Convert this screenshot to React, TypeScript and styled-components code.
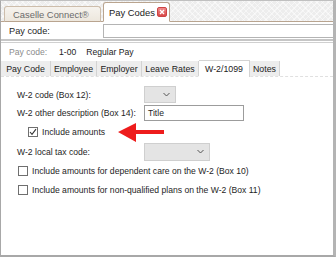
import React from "react";
import styled, { createGlobalStyle } from "styled-components";

const GlobalStyle = createGlobalStyle`
  html, body { margin: 0; padding: 0; background: #ffffff; }
  body { font-family: "Liberation Sans", Arial, sans-serif; font-size: 8.6px; color: #1e1e1e; }
`;

const Frame = styled.div`
  width: 336px;
  height: 257px;
  box-sizing: border-box;
  border-left: 1px solid #a8a8a8;
  border-top: 1px solid #c0c0c0;
  border-right: 3px solid #b4b4b4;
  border-bottom: 2px solid #a8a8a8;
  display: flex;
  flex-direction: column;
  overflow: hidden;
  position: relative;
`;

const TabStrip = styled.div`
  height: 20px;
  display: flex;
  align-items: flex-end;
  padding-left: 3px;
  gap: 2px;
  background-color: #ededed;
  background-image: repeating-linear-gradient(45deg, rgba(255,255,255,0.5) 0 1px, transparent 1px 4px),
    repeating-linear-gradient(-45deg, rgba(255,255,255,0.5) 0 1px, transparent 1px 4px);
  border-bottom: 1px solid #b9a48f;
`;

const DocTab = styled.div<{ $active?: boolean }>`
  box-sizing: border-box;
  flex-shrink: 0;
  white-space: nowrap;
  height: ${(p) => (p.$active ? 20 : 16)}px;
  width: ${(p) => (p.$active ? 67 : 97)}px;
  margin-bottom: -1px;
  border: 1px solid ${(p) => (p.$active ? "#b9a48f" : "#cdbdab")};
  border-bottom: ${(p) => (p.$active ? "1px solid #ffffff" : "1px solid #b9a48f")};
  border-radius: 3px 3px 0 0;
  background: ${(p) => (p.$active ? "#ffffff" : "linear-gradient(#f6f3ee, #ede7dd)")};
  color: ${(p) => (p.$active ? "#222" : "#6b6b6b")};
  font-size: 9.4px;
  display: flex;
  align-items: center;
  justify-content: space-between;
  padding: 0 2px 0 ${(p) => (p.$active ? 5 : 8)}px;
`;

const CloseBox = styled.span`
  width: 10px;
  height: 10px;
  border-radius: 2px;
  background: linear-gradient(#f08a8a, #d94848);
  border: 1px solid #c44;
  box-sizing: border-box;
  display: flex;
  align-items: center;
  justify-content: center;
`;

const SearchRow = styled.div`
  height: 17px;
  display: flex;
  align-items: center;
  padding-left: 8px;
  background: #ffffff;
  font-size: 9.2px;
`;

const SearchLabel = styled.span`
  width: 94px;
`;

const SearchInput = styled.div`
  flex: 1;
  height: 14px;
  border: 1px solid #b4b4b4;
  border-right: none;
  box-sizing: border-box;
`;

const Divider = styled.div`
  height: 1px;
  border-top: 2px solid #c6c6c6;
  border-bottom: 1px solid #d0d0d0;
`;

const InfoRow = styled.div`
  height: 17px;
  display: flex;
  align-items: center;
  padding-left: 8px;
  gap: 10px;
  color: #222;
`;

const InfoLabel = styled.span`
  color: #8c8c8c;
  width: 40px;
`;

const TabRow = styled.div`
  height: 16px;
  display: flex;
  align-items: flex-end;
  border-bottom: 1px dashed #e0e0e0;
`;

const PanelTab = styled.div<{ $active?: boolean; $w: number }>`
  box-sizing: border-box;
  width: ${(p) => p.$w}px;
  height: ${(p) => (p.$active ? 17 : 15)}px;
  margin-bottom: ${(p) => (p.$active ? -1 : 0)}px;
  background: ${(p) => (p.$active ? "#ffffff" : "#ededed")};
  border-right: 1px solid #d3d3d3;
  border-top: ${(p) => (p.$active ? "1px solid #d3d3d3" : "none")};
  display: flex;
  align-items: center;
  justify-content: center;
  color: #222;
  font-size: 8.8px;
`;

const Panel = styled.div`
  flex: 1;
  padding: 8px 0 0 16px;
  display: flex;
  flex-direction: column;
`;

const FieldRow = styled.div<{ $h: number }>`
  height: ${(p) => p.$h}px;
  display: flex;
  align-items: center;
`;

const FieldLabel = styled.span`
  width: 127px;
`;

const Combo = styled.div<{ $w: number; $h: number }>`
  box-sizing: border-box;
  width: ${(p) => p.$w}px;
  height: ${(p) => p.$h}px;
  background: #e4e4e4;
  border: 1px solid #cfcfcf;
  display: flex;
  align-items: center;
  justify-content: flex-end;
  padding-right: 5px;
`;

const TextBox = styled.div`
  box-sizing: border-box;
  width: 100px;
  height: 16px;
  border: 1px solid #9c9c9c;
  display: flex;
  align-items: center;
  padding-left: 3px;
`;

const CheckRow = styled.label<{ $indent?: number; $h: number }>`
  height: ${(p) => p.$h}px;
  display: flex;
  align-items: center;
  gap: 4px;
  padding-left: ${(p) => p.$indent ?? 1}px;
`;

const Box = styled.span`
  box-sizing: border-box;
  width: 10px;
  height: 10px;
  border: 1px solid #6f6f6f;
  background: #ffffff;
  display: flex;
  align-items: center;
  justify-content: center;
`;

const Arrow = styled.svg`
  position: absolute;
  left: 116px;
  top: 121px;
`;

const Chevron = () => (
  <svg width="7" height="5" viewBox="0 0 7 5">
    <path d="M0.5 1 L3.5 4 L6.5 1" fill="none" stroke="#555" strokeWidth="1" />
  </svg>
);

const Check = ({ checked }: { checked?: boolean }) => (
  <Box>
    {checked && (
      <svg width="8" height="8" viewBox="0 0 8 8">
        <path d="M1 4 L3 6.3 L7 1.2" fill="none" stroke="#333" strokeWidth="1.1" />
      </svg>
    )}
  </Box>
);

const tabs = [
  { label: "Pay Code", w: 50 },
  { label: "Employee", w: 46 },
  { label: "Employer", w: 45 },
  { label: "Leave Rates", w: 57 },
  { label: "W-2/1099", w: 51, active: true },
  { label: "Notes", w: 30 },
];

export default function App() {
  return (
    <>
      <GlobalStyle />
      <Frame>
        <TabStrip>
          <DocTab>Caselle Connect®</DocTab>
          <DocTab $active>
            Pay Codes
            <CloseBox>
              <svg width="6" height="6" viewBox="0 0 6 6">
                <path d="M1 1 L5 5 M5 1 L1 5" stroke="#fff" strokeWidth="1.4" />
              </svg>
            </CloseBox>
          </DocTab>
        </TabStrip>
        <SearchRow>
          <SearchLabel>Pay code:</SearchLabel>
          <SearchInput />
        </SearchRow>
        <Divider />
        <InfoRow>
          <InfoLabel>Pay code:</InfoLabel>
          <span>1-00</span>
          <span>Regular Pay</span>
        </InfoRow>
        <TabRow>
          {tabs.map((t) => (
            <PanelTab key={t.label} $w={t.w} $active={t.active}>
              {t.label}
            </PanelTab>
          ))}
        </TabRow>
        <Panel>
          <FieldRow $h={19}>
            <FieldLabel>W-2 code (Box 12):</FieldLabel>
            <Combo $w={32} $h={17}>
              <Chevron />
            </Combo>
          </FieldRow>
          <FieldRow $h={18}>
            <FieldLabel>W-2 other description (Box 14):</FieldLabel>
            <TextBox>Title</TextBox>
          </FieldRow>
          <CheckRow $indent={11} $h={20}>
            <Check checked />
            Include amounts
          </CheckRow>
          <FieldRow $h={19}>
            <FieldLabel>W-2 local tax code:</FieldLabel>
            <Combo $w={66} $h={18}>
              <Chevron />
            </Combo>
          </FieldRow>
          <CheckRow $h={19}>
            <Check />
            Include amounts for dependent care on the W-2 (Box 10)
          </CheckRow>
          <CheckRow $h={19}>
            <Check />
            Include amounts for non-qualified plans on the W-2 (Box 11)
          </CheckRow>
        </Panel>
        <Arrow width="50" height="22" viewBox="0 0 50 22">
          <polygon points="1,10 19,1 19,8 47,8 47,12 19,12 19,20" fill="#ee1c1c" />
        </Arrow>
      </Frame>
    </>
  );
}
